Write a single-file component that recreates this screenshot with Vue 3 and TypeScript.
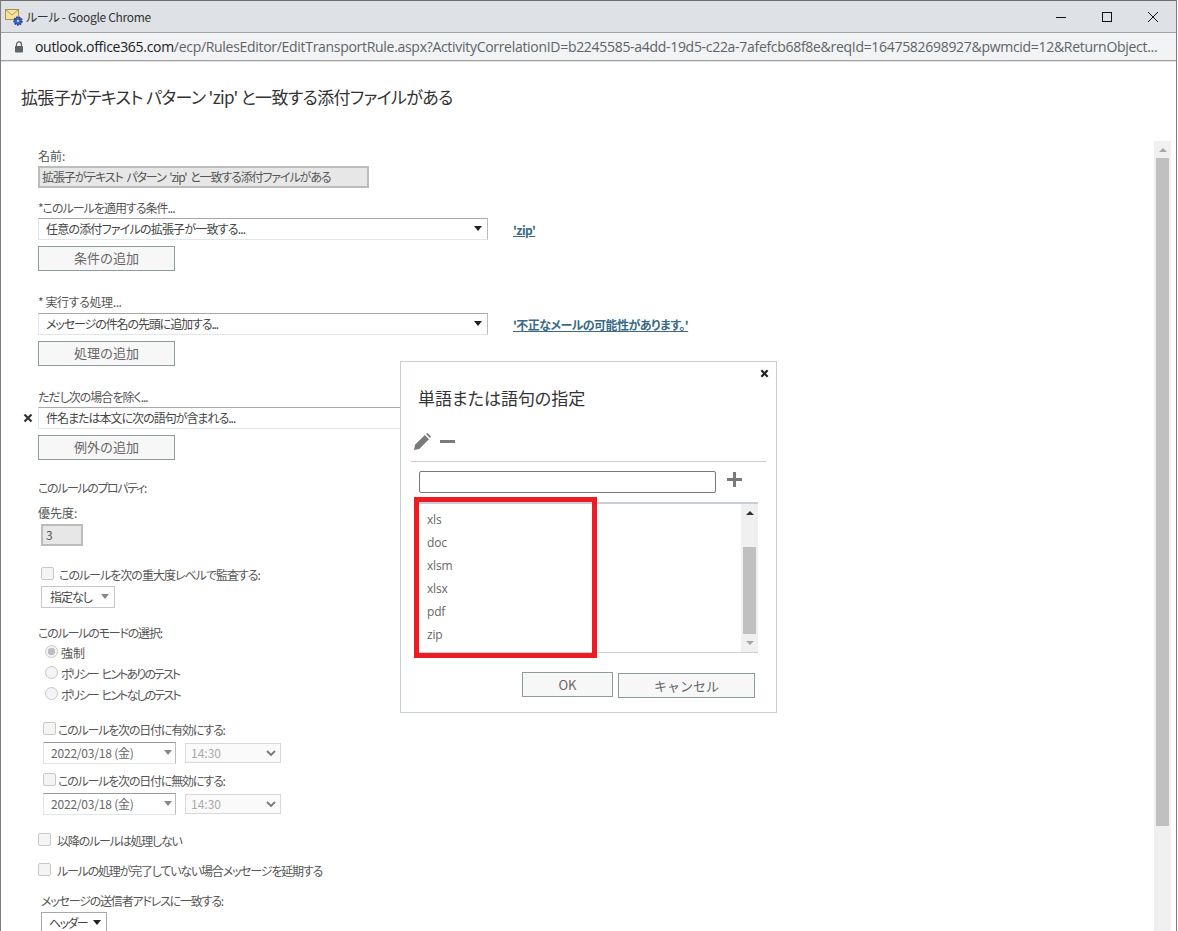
<script setup lang="ts">
const words: string[] = ['xls', 'doc', 'xlsm', 'xlsx', 'pdf', 'zip']
</script>

<template>
  <div class="window">
    <header class="titlebar">
      <svg class="favicon" width="18" height="18" viewBox="0 0 18 18">
        <rect x="0.5" y="1.5" width="13" height="10" fill="#f6e3a0" stroke="#a88f4a" />
        <path d="M1 2l6 5 6-5" fill="none" stroke="#b89a4e" />
        <circle cx="13" cy="13" r="3.8" fill="#3f63c4" stroke="#24418f" stroke-dasharray="1.6 1" stroke-width="1.8" />
        <circle cx="13" cy="13" r="1.1" fill="#dfe8ff" />
      </svg>
      <span class="title-text">ルール - Google Chrome</span>
      <div class="win-controls">
        <svg width="12" height="12" viewBox="0 0 12 12"><path d="M1 6.500h10" stroke="#111" fill="none" /></svg>
        <svg width="12" height="12" viewBox="0 0 12 12"><rect x="1.500" y="1.500" width="9" height="9" stroke="#111" fill="none" /></svg>
        <svg width="12" height="12" viewBox="0 0 12 12"><path d="M1 1l10 10M11 1L1 11" stroke="#111" fill="none" /></svg>
      </div>
    </header>
    <div class="addressbar">
      <svg class="lock" width="10" height="12" viewBox="0 0 10 12">
        <path d="M2.500 5V3.400a2.500 2.500 0 0 1 5 0V5" fill="none" stroke="#5f6368" stroke-width="1.300" />
        <rect x="1" y="5" width="8" height="6.500" rx="0.800" fill="#5f6368" />
      </svg>
      <span class="url"><b>outlook.office365.com</b>/ecp/RulesEditor/EditTransportRule.aspx?ActivityCorrelationID=b2245585-a4dd-19d5-c22a-7afefcb68f8e&amp;reqId=1647582698927&amp;pwmcid=12&amp;ReturnObject...</span>
    </div>

    <h1 class="heading">拡張子がテキスト パターン 'zip' と一致する添付ファイルがある</h1>

    <div class="content">
      <main class="form">
        <div class="label">名前:</div>
        <div class="readonly name-input">拡張子がテキスト パターン 'zip' と一致する添付ファイルがある</div>

        <div class="label m12 t10">*このルールを適用する条件...</div>
        <div class="rule-row m2">
          <div class="select wide"><span class="t08">任意の添付ファイルの拡張子が一致する...</span><i class="caret"></i></div>
          <a class="link">'zip'</a>
        </div>
        <div class="btn add m6">条件の追加</div>

        <div class="label m23 t04">* 実行する処理...</div>
        <div class="rule-row m3">
          <div class="select wide"><span class="t11">メッセージの件名の先頭に追加する...</span><i class="caret"></i></div>
          <a class="link">'不正なメールの可能性があります。'</a>
        </div>
        <div class="btn add m6">処理の追加</div>

        <div class="label m23 t10">ただし次の場合を除く...</div>
        <div class="rule-row m2 except">
          <svg class="remove" width="10" height="10" viewBox="0 0 10 10"><path d="M1.500 1.500l7 7M8.500 1.500l-7 7" stroke="#333" stroke-width="2.200" fill="none" /></svg>
          <div class="select wide"><span class="t10">件名または本文に次の語句が含まれる...</span><i class="caret"></i></div>
        </div>
        <div class="btn add m6">例外の追加</div>

        <div class="label m20 t14">このルールのプロパティ:</div>
        <div class="label m9">優先度:</div>
        <div class="readonly priority m3">3</div>

        <div class="check-row audit m21"><i class="check"></i><span class="t10">このルールを次の重大度レベルで監査する:</span></div>
        <div class="select level m3"><span class="t10">指定なし</span><i class="caret muted"></i></div>

        <div class="label m17 t12">このルールのモードの選択:</div>
        <div class="radio-row m4"><i class="radio on"></i><span>強制</span></div>
        <div class="radio-row m5"><i class="radio"></i><span class="policy">ポリシー ヒントありのテスト</span></div>
        <div class="radio-row m5"><i class="radio"></i><span class="policy">ポリシー ヒントなしのテスト</span></div>

        <div class="check-row dated m19"><i class="check"></i><span class="t12">このルールを次の日付に有効にする:</span></div>
        <div class="date-row m4">
          <div class="select date"><span class="t02">2022/03/18 (金)</span><i class="caret muted"></i></div>
          <div class="time"><span>14:30</span><svg width="10" height="6" viewBox="0 0 10 6"><path d="M1 1l4 4 4-4" fill="none" stroke="#777" stroke-width="1.800" /></svg></div>
        </div>
        <div class="check-row dated m9"><i class="check"></i><span class="t12">このルールを次の日付に無効にする:</span></div>
        <div class="date-row m4">
          <div class="select date"><span class="t02">2022/03/18 (金)</span><i class="caret muted"></i></div>
          <div class="time"><span>14:30</span><svg width="10" height="6" viewBox="0 0 10 6"><path d="M1 1l4 4 4-4" fill="none" stroke="#777" stroke-width="1.800" /></svg></div>
        </div>

        <div class="check-row plain m18"><i class="check"></i><span class="t12">以降のルールは処理しない</span></div>
        <div class="check-row plain m14"><i class="check"></i><span class="t12">ルールの処理が完了していない場合メッセージを延期する</span></div>
        <div class="label sender m14 t12">メッセージの送信者アドレスに一致する:</div>
        <div class="select header-sel m3"><span class="t16">ヘッダー</span><i class="caret"></i></div>
      </main>

      <div class="page-scroll">
        <i class="arrow-up"></i>
        <div class="page-thumb"></div>
      </div>
    </div>

    <section class="dialog">
      <svg class="dialog-close" width="9" height="9" viewBox="0 0 10 10"><path d="M1.500 1.500l7 7M8.500 1.500l-7 7" stroke="#222" stroke-width="2.400" fill="none" /></svg>
      <h2 class="dialog-title">単語または語句の指定</h2>
      <div class="toolbar">
        <svg width="17" height="17" viewBox="0 0 17 17"><path d="M0 17l1-5.200L10.800 2l4.200 4.200L5.200 16zM12 1l.8-.6a1 1 0 0 1 1.300 0l2.500 2.500a1 1 0 0 1 0 1.300L16 5z" fill="#7a7a7a" /></svg>
        <svg width="15" height="17" viewBox="0 0 15 17"><rect y="7" width="15" height="3" fill="#7a7a7a" /></svg>
      </div>
      <div class="entry-row">
        <div class="entry"></div>
        <svg class="plus" width="15" height="15" viewBox="0 0 15 15"><path d="M6 0h3v6h6v3H9v6H6V9H0V6h6z" fill="#7a7a7a" /></svg>
      </div>
      <div class="list">
        <ul class="items">
          <li v-for="word in words" :key="word">{{ word }}</li>
        </ul>
        <div class="list-scroll">
          <i class="arrow-up dark"></i>
          <div class="list-thumb"></div>
          <i class="arrow-down"></i>
        </div>
      </div>
      <div class="dialog-actions">
        <div class="btn ok">OK</div>
        <div class="btn cancel">キャンセル</div>
      </div>
    </section>

    <div class="highlight"></div>
  </div>
</template>

<style>
html, body { margin: 0; background: #fff; }
</style>

<style scoped>
.window {
  position: relative;
  box-sizing: border-box;
  width: 1177px;
  height: 931px;
  overflow: hidden;
  display: flex;
  flex-direction: column;
  background: #fff;
  border-top: 1px solid #6e6e6e;
  border-left: 1px solid #7d7d7d;
  border-right: 1px solid #7d7d7d;
  color: #555;
  font-family: "Noto Sans CJK JP", "Open Sans", sans-serif;
  font-feature-settings: "palt";
  font-size: 12px;
}
.titlebar {
  height: 31px;
  flex: none;
  display: flex;
  align-items: center;
  background: #dee1e6;
  padding-left: 4px;
  box-sizing: border-box;
}
.title-text { margin-left: 3px; font-size: 12px; letter-spacing: -0.3px; color: #333; }
.win-controls {
  margin-left: auto;
  display: flex;
  gap: 34px;
  padding-right: 17px;
}
.addressbar {
  height: 29px;
  flex: none;
  box-sizing: border-box;
  display: flex;
  align-items: center;
  background: #f1f3f4;
  border-top: 1px solid #a3a3a3;
  border-bottom: 1px solid #a3a3a3;
  box-shadow: 0 1px 0 #e2e2e2;
  padding-left: 13px;
}
.lock { flex: none; }
.url {
  flex: none;
  margin-left: 11px;
  white-space: nowrap;
  font-family: "Open Sans", sans-serif;
  font-size: 14px;
  letter-spacing: -0.3px;
  color: #5f6368;
}
.url b { font-weight: 400; color: #202124; }
.heading {
  flex: none;
  height: 80px;
  box-sizing: border-box;
  margin: 0;
  padding: 24px 0 0 20px;
  font-size: 17px;
  line-height: 24px;
  letter-spacing: -0.63px;
  font-weight: 400;
  color: #333;
  white-space: nowrap;
}
.content { flex: 1; display: flex; min-height: 0; }
.form { flex: 1; padding: 7px 0 0 37px; min-width: 0; }
.label { height: 16px; line-height: 16px; white-space: nowrap; }
.readonly {
  box-sizing: border-box;
  height: 22px;
  line-height: 17px;
  background: #e7e7e7;
  border: 2px solid #bcbcbc;
  padding-left: 2px;
  white-space: nowrap;
  overflow: hidden;
}
.name-input { width: 331px; margin-top: 2px; letter-spacing: -1.1px; word-spacing: 2px; }
.priority { width: 42px; margin-left: 3px; padding-left: 3px; }
.select {
  box-sizing: border-box;
  height: 22px;
  display: flex;
  align-items: center;
  justify-content: space-between;
  border: 1px solid #e1e6ea;
  border-top-color: #a8a8a8;
  border-right-color: #bcbcbc;
  background: #fff;
  padding: 0 5px 1px 7px;
  color: #444;
  white-space: nowrap;
}
.wide { width: 450px; flex: none; }
.caret {
  width: 0;
  height: 0;
  border-left: 4px solid transparent;
  border-right: 4px solid transparent;
  border-top: 5px solid #222;
  flex: none;
}
.caret.muted { border-top-color: #888; }
.rule-row { display: flex; align-items: center; gap: 25px; position: relative; }
.except { gap: 0; }
.remove { position: absolute; left: -15px; top: 6px; }
.link {
  font-weight: 700;
  letter-spacing: -0.55px;
  color: #3a6a85;
  text-decoration: underline;
  white-space: nowrap;
}
.btn {
  box-sizing: border-box;
  display: flex;
  align-items: center;
  justify-content: center;
  padding-bottom: 3px;
  background: #f7f7f7;
  border: 1px solid #8f9c9c;
  color: #666;
  font-size: 13px;
  font-feature-settings: normal;
}
.add { width: 137px; height: 25px; }
.check-row, .radio-row {
  height: 16px;
  display: flex;
  align-items: center;
  white-space: nowrap;
}
.check-row span, .radio-row span { padding-bottom: 2px; }
.check {
  box-sizing: border-box;
  width: 13px;
  height: 13px;
  flex: none;
  background: #f4f4f4;
  border: 1px solid #c8c8c8;
  border-radius: 2px;
  margin-top: -4px;
}
.audit { padding-left: 3px; gap: 5px; }
.dated { padding-left: 5px; gap: 2px; }
.plain { gap: 6px; }
.radio-row { padding-left: 7px; gap: 3px; }
.radio {
  box-sizing: border-box;
  width: 13px;
  height: 13px;
  flex: none;
  border: 1px solid #c8c8c8;
  border-radius: 50%;
  background: #f4f4f4;
  margin-top: -3px;
}
.radio.on { background: radial-gradient(circle, #bdbdbd 0 3.5px, #f4f4f4 4px); }
.policy { letter-spacing: -1.9px; word-spacing: 3px; }
.level { width: 74px; margin-left: 3px; border-color: #c8c8cc; padding-left: 8px; }
.date-row { display: flex; gap: 9px; margin-left: 5px; }
.date { width: 133px; border-top-color: #999; color: #666; padding-right: 3px; }
.time {
  box-sizing: border-box;
  width: 96px;
  height: 20px;
  margin-top: 1px;
  display: flex;
  align-items: center;
  justify-content: space-between;
  padding: 0 4px 1px 5px;
  background: #fafafa;
  border: 1px solid #d8d8d8;
  color: #aaa;
}
.sender { margin-left: 3px; }
.header-sel {
  width: 66px;
  margin-left: 3px;
  padding: 0 5px 1px 7px;
  border-color: #a8a8a8;
}
.t02 { letter-spacing: -0.2px; }
.t04 { letter-spacing: -0.4px; }
.t08 { letter-spacing: -0.8px; }
.t10 { letter-spacing: -1px; }
.t11 { letter-spacing: -1.1px; }
.t12 { letter-spacing: -1.2px; }
.t14 { letter-spacing: -1.4px; }
.t16 { letter-spacing: -1.6px; }
.m2 { margin-top: 2px; }
.m3 { margin-top: 3px; }
.m4 { margin-top: 4px; }
.m5 { margin-top: 5px; }
.m6 { margin-top: 6px; }
.m9 { margin-top: 9px; }
.m12 { margin-top: 12px; }
.m14 { margin-top: 14px; }
.m17 { margin-top: 17px; }
.m18 { margin-top: 18px; }
.m19 { margin-top: 19px; }
.m20 { margin-top: 20px; }
.m21 { margin-top: 21px; }
.m23 { margin-top: 23px; }
.page-scroll {
  width: 17px;
  flex: none;
  margin-right: 5px;
  background: #f0f0f0;
  display: flex;
  flex-direction: column;
  align-items: center;
  padding-top: 7px;
  box-sizing: border-box;
}
.arrow-up {
  width: 0;
  height: 0;
  border-left: 4px solid transparent;
  border-right: 4px solid transparent;
  border-bottom: 4px solid #a6a6a6;
  flex: none;
}
.arrow-up.dark { border-bottom-color: #333; }
.arrow-down {
  width: 0;
  height: 0;
  border-left: 4px solid transparent;
  border-right: 4px solid transparent;
  border-top: 4px solid #a6a6a6;
  flex: none;
}
.page-thumb {
  width: 13px;
  height: 668px;
  margin-top: 6px;
  background: #c0c0c0;
}
.dialog {
  position: absolute;
  left: 399px;
  top: 360px;
  box-sizing: border-box;
  width: 377px;
  height: 352px;
  background: #fff;
  border: 1px solid #c8ced3;
  display: flex;
  flex-direction: column;
}
.dialog-close { position: absolute; right: 7px; top: 7px; }
.dialog-title {
  margin: 24px 0 0 17px;
  font-size: 17px;
  line-height: 24px;
  font-weight: 400;
  color: #333;
}
.toolbar {
  margin: 23px 10px 0;
  padding: 0 3px 11px;
  display: flex;
  align-items: center;
  gap: 9px;
  border-bottom: 1px solid #ccc;
}
.entry-row { display: flex; align-items: flex-start; gap: 11px; margin: 9px 0 0 18px; }
.plus { margin-top: 1px; }
.entry {
  box-sizing: border-box;
  width: 297px;
  height: 22px;
  border: 1px solid #777;
  border-radius: 2px;
}
.list {
  box-sizing: border-box;
  margin: 9px 0 0 18px;
  width: 339px;
  height: 151px;
  border-top: 2px solid #c8ced3;
  border-bottom: 1px solid #c8ced3;
  display: flex;
  justify-content: space-between;
}
.items { list-style: none; margin: 0; padding: 4px 0 0 8px; }
.items li { height: 23px; line-height: 23px; color: #666; font-family: "Open Sans", sans-serif; letter-spacing: -0.2px; }
.list-scroll {
  box-sizing: border-box;
  width: 17px;
  background: #f0f0f0;
  display: flex;
  flex-direction: column;
  align-items: center;
  padding-top: 7px;
}
.list-thumb { width: 13px; height: 87px; margin: 32px 0 7px; background: #c0c0c0; }
.dialog-actions { display: flex; margin: 19px 0 0 121px; gap: 5px; align-items: flex-start; }
.dialog-actions .btn { padding-bottom: 1px; }
.ok { width: 91px; height: 25px; }
.cancel { width: 137px; height: 25px; margin-top: 1px; }
.highlight {
  position: absolute;
  left: 413px;
  top: 496px;
  box-sizing: border-box;
  width: 183px;
  height: 161px;
  border: 5px solid #ed1c24;
}
</style>
